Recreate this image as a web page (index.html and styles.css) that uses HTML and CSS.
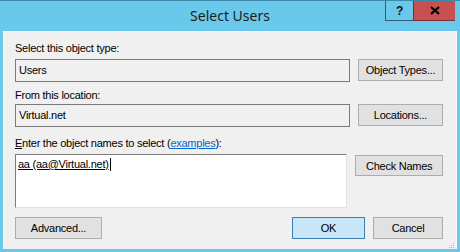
FILE: index.html
```html
<!DOCTYPE html>
<html>
<head>
<meta charset="utf-8">
<link rel="stylesheet" href="styles.css">
</head>
<body>
<div class="window">
  <div class="titlebar">
    <div></div>
    <div class="title">Select Users</div>
    <div class="controls">
      <div class="ctl help">?</div>
      <div class="ctl close">
        <svg width="10" height="9" viewBox="0 0 10 9"><path d="M1 1 L9 8 M9 1 L1 8" stroke="#000" stroke-width="2.2" fill="none"/></svg>
      </div>
    </div>
  </div>
  <div class="client">
    <div class="label l1">Select this object type:</div>
    <div class="row r1">
      <div class="field">Users</div>
      <div class="btn b-top">Object Types...</div>
    </div>
    <div class="label l2">From this location:</div>
    <div class="row r2">
      <div class="field">Virtual.net</div>
      <div class="btn b-top">Locations...</div>
    </div>
    <div class="label l3"><u>E</u>nter the object names to select (<a class="link">examples</a>):</div>
    <div class="row r3">
      <div class="area"><span class="entry">aa (aa@Virtual.net)</span><span class="caret"></span></div>
      <div class="btn b-check">Check Names</div>
    </div>
    <div class="bottom">
      <div class="btn b-adv">Advanced...</div>
      <div class="spacer"></div>
      <div class="btn b-ok">OK</div>
      <div class="btn b-cancel">Cancel</div>
    </div>
    <svg class="grip" width="7" height="7" viewBox="0 0 7 7">
      <rect x="5" y="1" width="1" height="1" fill="#b5b5b5"/>
      <rect x="3" y="3" width="1" height="1" fill="#b5b5b5"/>
      <rect x="5" y="3" width="1" height="1" fill="#b5b5b5"/>
      <rect x="1" y="5" width="1" height="1" fill="#b5b5b5"/>
      <rect x="3" y="5" width="1" height="1" fill="#b5b5b5"/>
      <rect x="5" y="5" width="1" height="1" fill="#b5b5b5"/>
    </svg>
  </div>
</div>
</body>
</html>
```
FILE: styles.css
```css
html, body {
  margin: 0;
  padding: 0;
  background: #6ac9ea;
}
.window {
  width: 460px;
  height: 252px;
  box-sizing: border-box;
  background: #6ac9ea;
  border-top: 1px solid #3f89ab;
  display: flex;
  flex-direction: column;
  font-family: "Liberation Sans", Arial, sans-serif;
  font-size: 11px;
  letter-spacing: -0.25px;
  color: #000;
}
.titlebar {
  height: 30px;
  display: grid;
  grid-template-columns: 1fr auto 1fr;
  flex: none;
}
.title {
  font-family: "Noto Sans", "Open Sans", sans-serif;
  font-size: 14px;
  letter-spacing: 0;
  color: #1b1b1b;
  padding-top: 5px;
  line-height: 20px;
}
.controls {
  justify-self: end;
  display: flex;
  height: 20px;
  margin-right: 5px;
}
.ctl {
  display: flex;
  align-items: center;
  justify-content: center;
  box-sizing: border-box;
  height: 20px;
}
.help {
  width: 28px;
  border-left: 1px solid #2f5e78;
  border-bottom: 1px solid #2f5e78;
  font-family: "Liberation Sans", Arial, sans-serif;
  font-weight: bold;
  font-size: 12px;
  color: #111;
}
.close {
  width: 42px;
  background: #c75050;
  border-bottom: 1px solid #7a3030;
  border-left: 1px solid #7a3030;
}
.client {
  flex: 1;
  margin: 0 3px 3px 3px;
  background: #f0f0f0;
  border: 1px solid #fafafa;
  border-bottom: none;
  position: relative;
  padding: 0 13px 0 11px;
  display: flex;
  flex-direction: column;
}
.label {
  line-height: 13px;
  height: 13px;
  white-space: nowrap;
}
.l1 { margin-top: 10px; }
.l2 { margin-top: 7px; }
.l3 { margin-top: 10px; }
.link {
  color: #0066cc;
  text-decoration: underline;
}
.row {
  display: flex;
  gap: 8px;
  align-items: flex-start;
}
.r1 { margin-top: 4px; }
.r2 { margin-top: 2px; }
.r3 { margin-top: 4px; }
.field {
  width: 335px;
  height: 23px;
  box-sizing: border-box;
  border: 1px solid #7a7a7a;
  background: #f0f0f0;
  padding: 0 3px;
  line-height: 21px;
}
.btn {
  box-sizing: border-box;
  height: 22px;
  border: 1px solid #adadad;
  background: #e1e1e1;
  display: flex;
  align-items: center;
  justify-content: center;
  white-space: nowrap;
}
.b-top { width: 85px; }
.b-check { width: 88px; height: 21px; margin-top: 1px; }
.area {
  width: 334px;
  height: 54px;
  box-sizing: border-box;
  background: #fff;
  border-top: 1px solid #7a7a7a;
  border-left: 1px solid #7a7a7a;
  border-right: 1px solid #e3e3e3;
  border-bottom: 1px solid #e3e3e3;
  padding: 3px 2px;
  line-height: 13px;
  display: flex;
  align-items: flex-start;
}
.entry {
  text-decoration: underline;
}
.caret {
  width: 1px;
  height: 13px;
  background: #000;
  margin-left: 1px;
}
.bottom {
  display: flex;
  margin-top: 9px;
  gap: 8px;
}
.spacer { flex: 1; }
.b-adv { width: 87px; }
.b-ok {
  width: 73px;
  background: #c7e6f8;
  border-color: #3c7fb1;
}
.b-cancel { width: 70px; }
.grip {
  position: absolute;
  right: 1px;
  bottom: 0px;
}
```
